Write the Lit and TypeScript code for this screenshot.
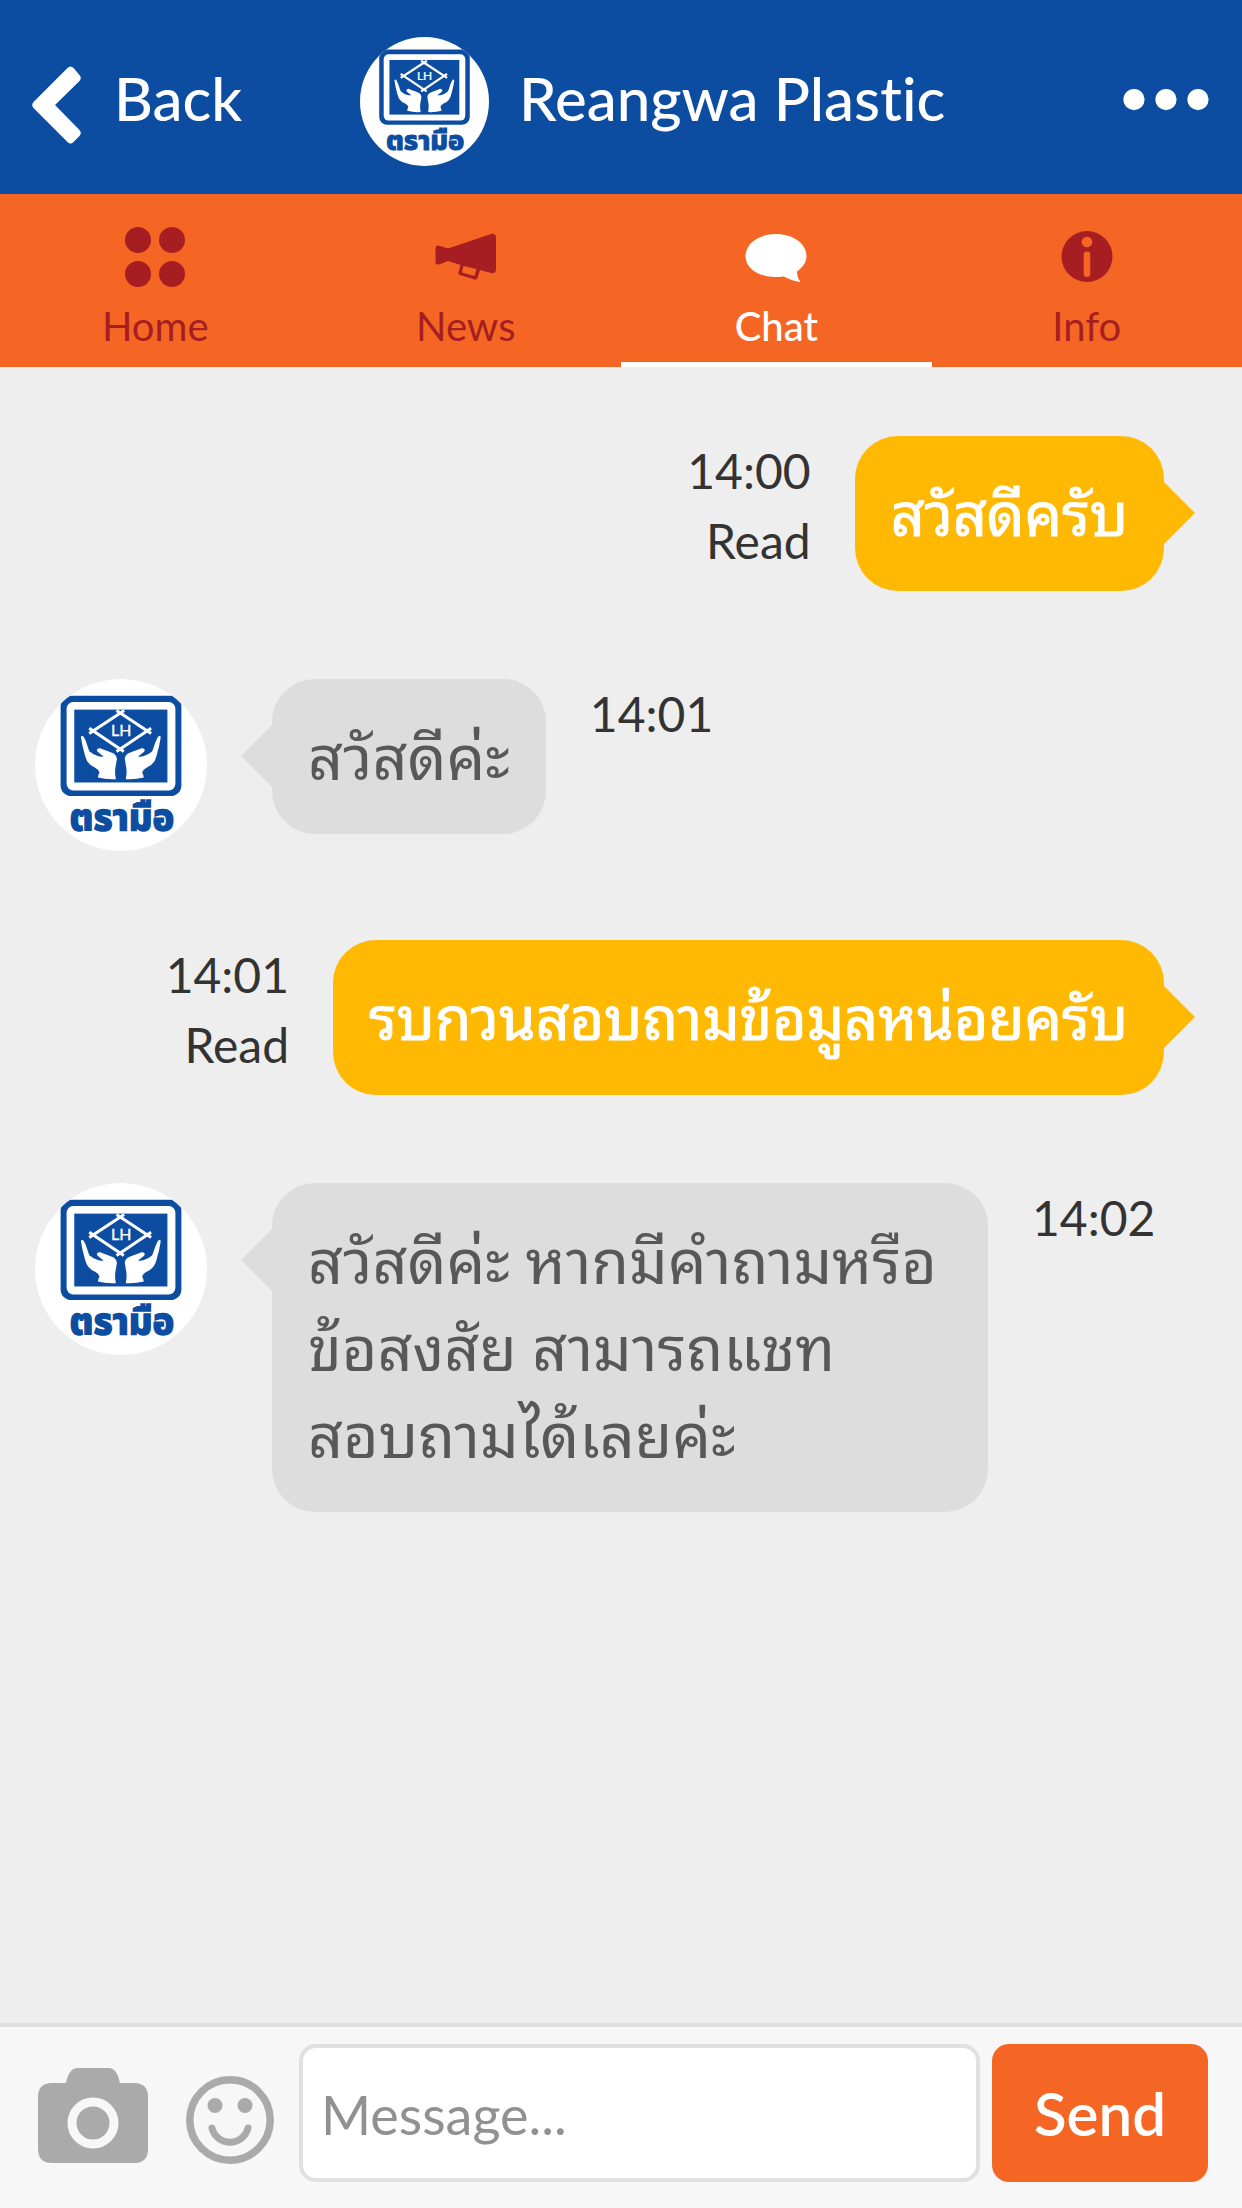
import { LitElement, html, css, svg } from "lit";
import { customElement, property } from "lit/decorators.js";

const FONT = css`Lato, "Noto Sans Thai Looped", "Loma", "Waree", "Umpush", "Garuda", "Noto Sans Thai", "Noto Sans", sans-serif`;

type Message = { from: "me" | "shop"; text: string; time: string; read?: boolean };

const MESSAGES: Message[] = [
  { from: "me", text: "สวัสดีครับ", time: "14:00", read: true },
  { from: "shop", text: "สวัสดีค่ะ", time: "14:01" },
  { from: "me", text: "รบกวนสอบถามข้อมูลหน่อยครับ", time: "14:01", read: true },
  { from: "shop", text: "สวัสดีค่ะ หากมีคำถามหรือ\nข้อสงสัย สามารถแชท\nสอบถามได้เลยค่ะ", time: "14:02" },
];

const TABS = [
  {
    label: "Home",
    icon: svg`<circle cx="18" cy="18" r="13"/><circle cx="52" cy="18" r="13"/><circle cx="18" cy="52" r="13"/><circle cx="52" cy="52" r="13"/>`,
  },
  {
    label: "News",
    icon: svg`<path d="M4.500 26q0-3 3-2.500L17 26.500 60 12q5-1 5 4V47q0 5-5 4L49 48 46.500 56q-.8 2-3 1.500L29 53q-2-.8-1.400-3L29.500 43 17 39 8 42.500q-3.500.500-3.500-2zM32.500 44l-1.500 6.500L43.500 54l2-7z" fill-rule="evenodd"/>`,
  },
  {
    label: "Chat",
    icon: svg`<path d="M35 12c17 0 30.500 9.500 30.500 22 0 6.500-4 11.500-9.500 15.500 0 4 1 7 3.500 10.500C53 59.500 48 57 42.500 54.500 20 57.500 4.500 47.500 4.500 34c0-12.500 13.500-22 30.500-22z"/>`,
  },
  {
    label: "Info",
    icon: svg`<circle cx="35" cy="34.500" r="25.500"/><g fill="#f56624"><circle cx="35" cy="20" r="5.300"/><rect x="31.700" y="29.500" width="6.600" height="25.500" rx="3.300"/></g>`,
  },
];

@customElement("brand-logo")
export class BrandLogo extends LitElement {
  static styles = css`
    :host {
      display: block;
    }
    .logo {
      display: block;
      width: 100%;
      height: auto;
      border-radius: 50%;
      background: #fff;
    }
    .name {
      font: 800 109px "Noto Sans Thai", Lato, sans-serif;
      fill: #0c4da2;
      stroke: #0c4da2;
      stroke-width: 4px;
    }
    .initials {
      font: 400 48px Lato, sans-serif;
      fill: #fff;
      stroke: #fff;
      stroke-width: 1px;
    }
  `;

  render() {
    const hand = svg`<path d="M184 232q4-8 9 1c9 16 12 34 17 43q12 10 23 13 12 4 19 2l-18-14q-5-9 4-11 5-1 11 3 18 6 34 13 10 8 9 17l-5 30q-1 15 2 30-27 2-54-5 1-8 5-15-3-9-13-14-24-10-30-35-9-30-13-58z"/>`;
    return html`
      <svg class="logo" viewBox="44 58 517 517" role="img" aria-label="Reangwa Plastic logo">
        <rect x="121" y="108" width="363" height="302" rx="32" fill="#0c4da2" />
        <rect x="139" y="127" width="327" height="266" rx="20" fill="#fff" />
        <rect x="162" y="150" width="280" height="219" fill="#0c4da2" />
        <g stroke="#fff" stroke-width="9" fill="none">
          <path d="M207 206 311 276M207 222 312 153M289 153 393 222M289 276 393 206" />
        </g>
        <g fill="#fff" transform="translate(-2 0)">
          ${hand}
          <g transform="translate(608 0) scale(-1 1)">${hand}</g>
        </g>
        <text class="initials" x="303" y="230" text-anchor="middle">LH</text>
        <text class="name" x="305" y="512" text-anchor="middle">ตรามือ</text>
      </svg>
    `;
  }
}

@customElement("chat-message")
export class ChatMessage extends LitElement {
  @property({ attribute: false }) message!: Message;

  static styles = css`
    :host {
      display: block;
      font-family: ${FONT};
    }
    .row {
      display: flex;
      align-items: flex-start;
    }
    .mine {
      flex-direction: row-reverse;
      padding-right: 78px;
    }
    .theirs {
      min-height: 173px;
      padding-left: 35px;
    }
    .avatar {
      flex: none;
      width: 172px;
      margin-right: 65px;
    }
    .bubble {
      position: relative;
      box-sizing: border-box;
      padding: 34px 36px;
      border-radius: 43px;
      font-size: 61px;
      line-height: 87px;
      white-space: pre-line;
    }
    .bubble.long {
      width: 716px;
    }
    .mine .bubble {
      background: #ffb903;
      color: #fff;
      font-size: 59px;
      -webkit-text-stroke: 1px #fff;
    }
    .theirs .bubble {
      background: #ddd;
      color: #585858;
    }
    .bubble::after {
      content: "";
      position: absolute;
      top: 46px;
      width: 31px;
      height: 62px;
      background: inherit;
    }
    .mine .bubble::after {
      left: 100%;
      clip-path: polygon(0 0, 100% 50%, 0 100%);
    }
    .theirs .bubble::after {
      right: 100%;
      clip-path: polygon(100% 0, 0 50%, 100% 100%);
    }
    .meta {
      flex: none;
      margin: 0 44px;
      font-size: 48px;
      line-height: 70px;
      color: #333;
      text-align: right;
    }
    .time,
    .status {
      display: block;
    }
  `;

  render() {
    const { from, text, time, read } = this.message;
    const mine = from === "me";
    return html`
      <article class="row ${mine ? "mine" : "theirs"}">
        ${mine ? "" : html`<brand-logo class="avatar"></brand-logo>`}
        <div class="bubble ${text.includes("\n") ? "long" : ""}">${text}</div>
        <div class="meta">
          <time class="time">${time}</time>
          ${read ? html`<span class="status">Read</span>` : ""}
        </div>
      </article>
    `;
  }
}

@customElement("app-root")
export class AppRoot extends LitElement {
  static styles = css`
    :host {
      display: flex;
      flex-direction: column;
      min-height: 100vh;
      background: #eee;
      font-family: ${FONT};
      font-variant-ligatures: none;
    }
    button,
    input {
      font: inherit;
      border: 0;
      padding: 0;
      background: none;
    }
    svg {
      display: block;
    }
    .header {
      display: grid;
      grid-template-columns: auto 1fr auto;
      column-gap: 118px;
      align-items: center;
      height: 194px;
      box-sizing: border-box;
      padding: 8px 32px 0;
      background: #0c4da2;
      color: #fff;
      font-size: 60px;
      line-height: 80px;
      font-weight: 500;
    }
    .back {
      display: flex;
      align-items: center;
      gap: 32px;
      color: inherit;
    }
    .chevron {
      margin-top: 8px;
    }
    .label {
      padding-bottom: 6px;
    }
    .brand {
      display: flex;
      align-items: center;
      gap: 30px;
      margin: 0;
      font: inherit;
    }
    .mark {
      width: 129px;
    }
    .tabs {
      display: grid;
      grid-template-columns: repeat(4, 1fr);
      background: #f56624;
    }
    .tab {
      display: flex;
      flex-direction: column;
      align-items: center;
      height: 173px;
      padding-top: 28px;
      box-sizing: border-box;
      border-bottom: 5px solid transparent;
      color: #a61e22;
      font-size: 40px;
      line-height: 48px;
      text-decoration: none;
    }
    .tab.active {
      border-color: #fff;
      color: #fff;
      font-weight: 500;
    }
    .tab svg {
      fill: currentColor;
      margin-bottom: 10px;
    }
    .thread {
      flex: 1;
      display: flex;
      flex-direction: column;
      gap: 88px;
      padding: 69px 0;
    }
    .composer {
      display: flex;
      align-items: center;
      gap: 12px;
      padding: 17px 34px 26px 38px;
      background: #f7f7f7;
      border-top: 4px solid #e0e0e0;
    }
    .tools {
      display: flex;
      align-self: flex-end;
      align-items: flex-end;
      gap: 38px;
      margin-right: 13px;
      padding-bottom: 18px;
    }
    .message {
      flex: 1;
      min-width: 0;
      height: 138px;
      box-sizing: border-box;
      padding: 2px 18px 0;
      border: 4px solid #e0e0e0;
      border-radius: 17px;
      background: #fff;
      color: #333;
      font-size: 54px;
    }
    .message::placeholder {
      color: #919191;
      opacity: 1;
    }
    .send {
      width: 216px;
      height: 138px;
      border-radius: 17px;
      background: #f56624;
      color: #fff;
      font-size: 60px;
      font-weight: 600;
    }
  `;

  render() {
    return html`
      <header class="header">
        <button class="back" type="button">
          <svg class="chevron" width="50" height="78" viewBox="0 0 50 78" fill="#fff">
            <path d="M35.500 2q3-3 6 0l6 7q2.500 3 0 6L23 39 47.500 64q2.500 3 0 6l-6 6q-3 3-6 0L1.500 42q-2.500-3 0-6z" />
          </svg>
          <span class="label">Back</span>
        </button>
        <h1 class="brand">
          <brand-logo class="mark"></brand-logo>
          <span class="label">Reangwa Plastic</span>
        </h1>
        <button class="more" type="button" aria-label="More">
          <svg width="87" height="24" viewBox="0 0 87 24" fill="#fff">
            <circle cx="11" cy="10.600" r="10.600" />
            <circle cx="43" cy="10.600" r="10.600" />
            <circle cx="75" cy="10.600" r="10.600" />
          </svg>
        </button>
      </header>
      <nav class="tabs">
        ${TABS.map(
          (t) => html`
            <a class="tab ${t.label === "Chat" ? "active" : ""}" href="#${t.label.toLowerCase()}">
              <svg width="70" height="70" viewBox="0 0 70 70">${t.icon}</svg>
              <span>${t.label}</span>
            </a>
          `,
        )}
      </nav>
      <main class="thread">
        ${MESSAGES.map((m) => html`<chat-message .message=${m}></chat-message>`)}
      </main>
      <form class="composer" @submit=${(e: Event) => e.preventDefault()}>
        <div class="tools">
          <button type="button" aria-label="Send a photo">
            <svg width="110" height="96" viewBox="0 0 110 96">
              <path fill="#aaa" d="M14 15H28C30 6 33 0 40 0H70C77 0 80 6 82 15H96Q110 15 110 29V81Q110 95 96 95H14Q0 95 0 81V29Q0 15 14 15Z" />
              <circle cx="55" cy="55" r="21" fill="#aaa" stroke="#f7f7f7" stroke-width="9" />
            </svg>
          </button>
          <button type="button" aria-label="Insert an emoji">
            <svg width="88" height="88" viewBox="0 0 88 88" fill="#aaa">
              <circle cx="44" cy="44" r="40.200" fill="none" stroke="#aaa" stroke-width="7.500" />
              <circle cx="29" cy="29.500" r="7.500" />
              <circle cx="59" cy="29.500" r="7.500" />
              <path d="M26 52a18.500 18.500 0 0 0 36 0" fill="none" stroke="#aaa" stroke-width="7" stroke-linecap="round" />
            </svg>
          </button>
        </div>
        <input class="message" type="text" placeholder="Message..." aria-label="Message" />
        <button class="send" type="submit">Send</button>
      </form>
    `;
  }
}
